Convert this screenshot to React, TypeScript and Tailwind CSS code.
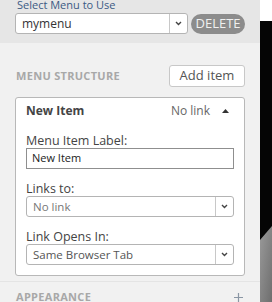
import React from "react";

const Chevron = () => (
  <svg width="7" height="5" viewBox="0 0 7 5" className="block">
    <path d="M1 1 L3.5 3.5 L6 1" fill="none" stroke="#444" strokeWidth="1.4" />
  </svg>
);

const SelectBox = ({ text, w, color, size }: { text: string; w: string; color: string; size: string }) => (
  <div className={`flex h-[21px] ${w} shrink-0 items-stretch rounded-[3px] border border-[#b4b4b4] bg-white`}>
    <div className={`flex flex-1 items-center pl-[6px] ${size} ${color}`}>{text}</div>
    <div className="flex w-[18px] items-center justify-center border-l border-[#c8c8c8]">
      <Chevron />
    </div>
  </div>
);

export default function App() {
  return (
    <div
      className="flex h-[302px] w-[272px] overflow-hidden bg-white"
      style={{ fontFamily: '"Open Sans", "Liberation Sans", sans-serif' }}
    >
      <div className="flex w-[260px] shrink-0 flex-col">
        <div className="flex h-[43px] shrink-0 flex-col bg-[#e6e6e6] pl-[15px]">
          <div className="-mt-[3px] h-[16px] pl-[2px] text-[11px] leading-[16px] text-[#3c5a84]">
            Select Menu to Use
          </div>
          <div className="flex items-center">
            <SelectBox text="mymenu" w="w-[173px]" color="text-[#333]" size="text-[12px]" />
            <div className="ml-[3px] flex h-[20px] w-[54px] items-center justify-center rounded-full bg-[#8c8c8c] text-[13px] text-[#f0f0f0]">
              DELETE
            </div>
          </div>
        </div>
        <div className="flex flex-1 flex-col bg-[#f1f1f1] pl-[15px] pr-[15px]">
          <div className="mt-[22px] flex h-[22px] items-center justify-between">
            <div className="pl-[1px] text-[11px] font-bold tracking-[0.3px] text-[#a8a8a8]">MENU STRUCTURE</div>
            <div className="flex h-[22px] w-[76px] items-center justify-center rounded-[3px] border border-[#c8c8c8] bg-white text-[13px] text-[#555]">
              Add item
            </div>
          </div>
          <div className="mt-[10px] w-[230px] rounded-[3px] border border-[#b8b8b8] bg-white px-[10px] pb-[10px]">
            <div className="flex h-[26px] items-center">
              <div className="flex-1 text-[12px] font-bold text-[#444]">New Item</div>
              <div className="text-[12px] text-[#666]">No link</div>
              <svg width="7" height="4" viewBox="0 0 7 4" className="ml-[12px] mr-[5px]">
                <path d="M0 4 L3.5 0 L7 4 Z" fill="#333" />
              </svg>
            </div>
            <div className="flex flex-col pt-[10px]">
              <div className="h-[14px] text-[12.5px] leading-[14px] text-[#444]">Menu Item Label:</div>
              <div className="flex h-[21px] w-[208px] shrink-0 items-center border border-[#8f8f8f] bg-white pl-[5px] text-[11px] text-[#222]">
                New Item
              </div>
              <div className="mt-[13px] h-[14px] text-[12.5px] leading-[14px] text-[#444]">Links to:</div>
              <SelectBox text="No link" w="w-[208px]" color="text-[#777]" size="text-[11.5px]" />
              <div className="mt-[13px] h-[14px] text-[12.5px] leading-[14px] text-[#444]">Link Opens In:</div>
              <SelectBox text="Same Browser Tab" w="w-[208px]" color="text-[#555]" size="text-[11.5px]" />
            </div>
          </div>
          <div className="-mx-[15px] mt-[5px] border-t border-[#e4e4e4]" />
          <div className="mt-[8px] flex items-center justify-between">
            <div className="pl-[1px] text-[11px] font-bold leading-[14px] tracking-[0.3px] text-[#a8a8a8]">APPEARANCE</div>
            <svg width="9" height="9" viewBox="0 0 9 9" className="mr-[2px]">
              <path d="M4.5 0 V9 M0 4.5 H9" stroke="#8a96a4" strokeWidth="1.2" />
            </svg>
          </div>
        </div>
      </div>
      <div className="w-[12px] shrink-0">
        <svg width="12" height="302" viewBox="0 0 12 302" className="block">
          <defs>
            <linearGradient id="g" x1="0" y1="0" x2="1" y2="1">
              <stop offset="0" stopColor="#9a9a9a" />
              <stop offset="1" stopColor="#6e6e6e" />
            </linearGradient>
          </defs>
          <rect x="0" y="0" width="12" height="21" fill="#ffffff" />
          <rect x="0" y="21" width="12" height="281" fill="#050505" />
          <polygon points="0,240 12,226 12,302 0,302" fill="url(#g)" />
        </svg>
      </div>
    </div>
  );
}
